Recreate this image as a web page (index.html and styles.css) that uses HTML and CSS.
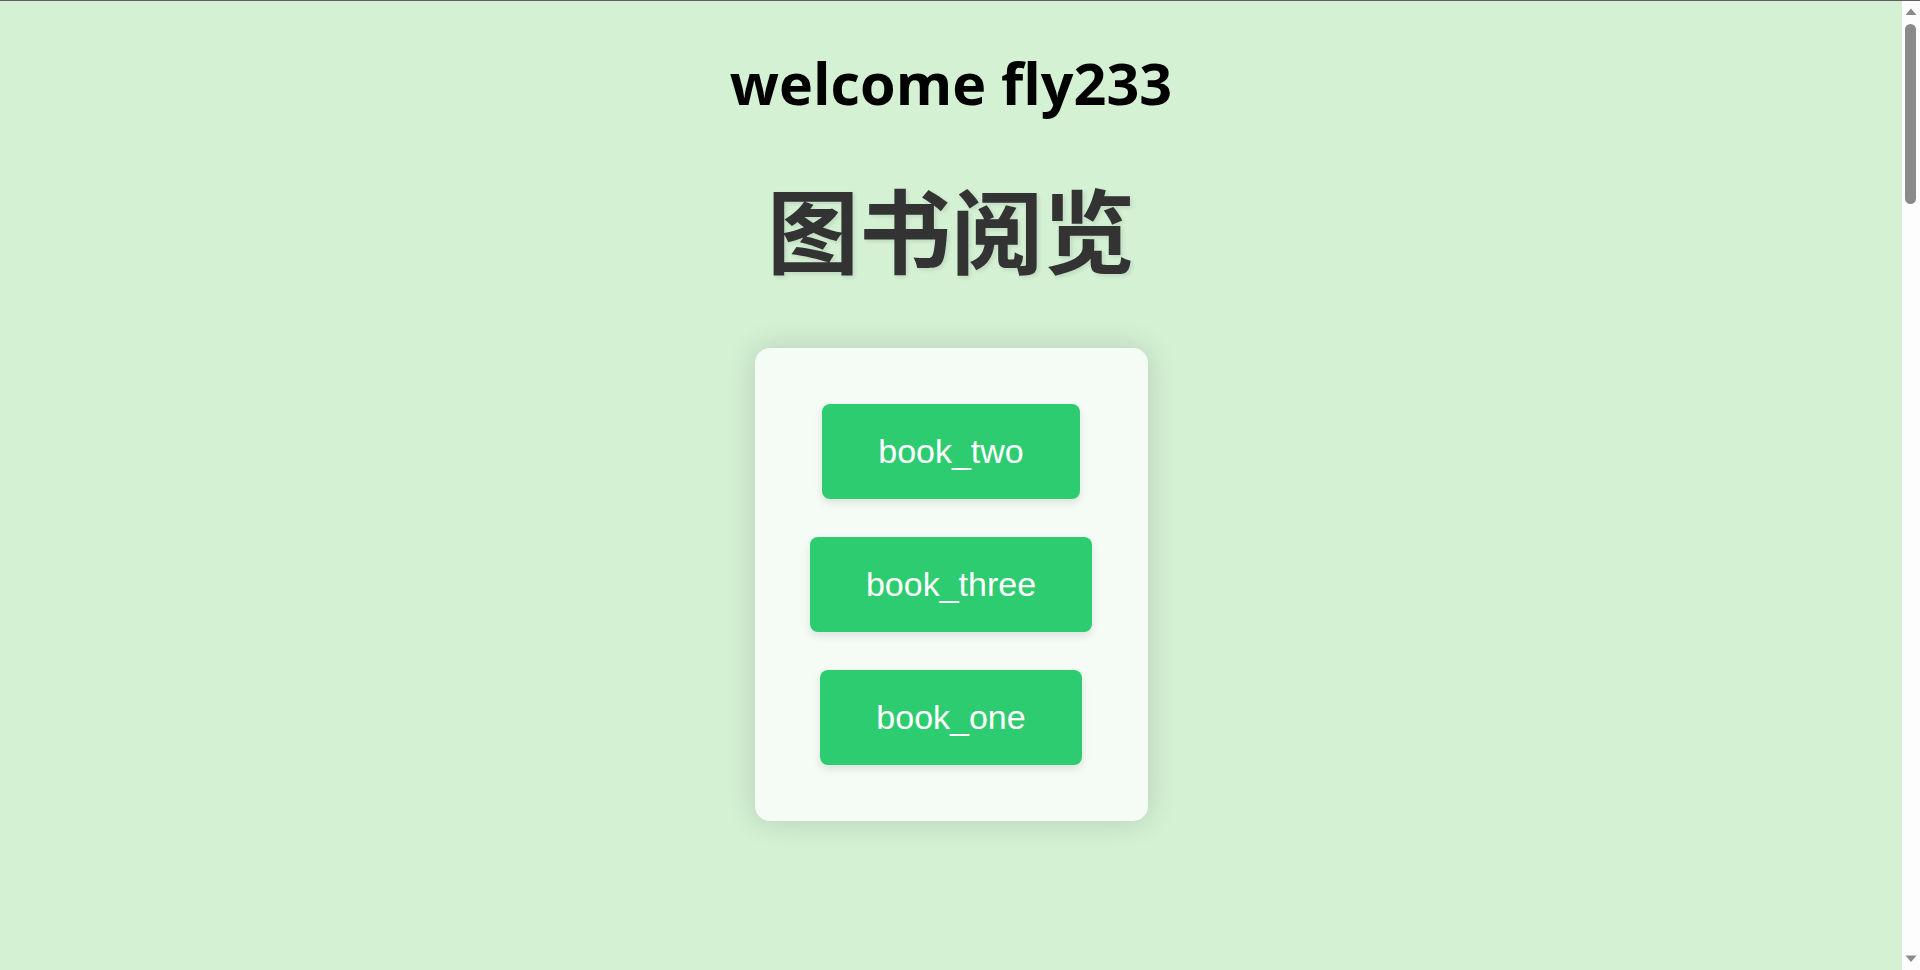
FILE: index.html
```html
<!DOCTYPE html>
<html lang="zh-CN">
<head>
<meta charset="utf-8">
<title>图书阅览</title>
<link rel="stylesheet" href="styles.css">
</head>
<body>
<div class="page">
  <h1 class="welcome">welcome fly233</h1>
  <h2 class="title">图书阅览</h2>
  <div class="card">
    <button class="book">book_two</button>
    <button class="book">book_three</button>
    <button class="book">book_one</button>
  </div>
</div>
<div class="scrollbar" aria-hidden="true">
  <svg class="arrow" width="18" height="17" viewBox="0 0 18 17"><polygon points="9,7.5 14.5,14 3.5,14" fill="#8a8a8a"/></svg>
  <div class="thumb"></div>
  <div class="track-rest"></div>
  <svg class="arrow" width="18" height="17" viewBox="0 0 18 17"><polygon points="3.5,2.5 14.5,2.5 9,9" fill="#8a8a8a"/></svg>
</div>
</body>
</html>
```
FILE: styles.css
```css
html, body {
  margin: 0;
  padding: 0;
}
body {
  background: #d4f1d4;
  overflow: hidden;
}
.page {
  border-top: 1px solid #5f5f5f;
  box-sizing: border-box;
  min-height: 970px;
  padding-right: 18px;
  display: flex;
  flex-direction: column;
  align-items: center;
  text-align: center;
}
.welcome {
  margin: 44px 0 0;
  font-family: "Open Sans", "Noto Sans CJK SC", sans-serif;
  font-weight: 700;
  font-size: 57.5px;
  line-height: 76px;
  color: #000;
}
.title {
  margin: 39px 0 0;
  font-family: "Noto Sans CJK SC", sans-serif;
  font-weight: 700;
  font-size: 92px;
  line-height: 133px;
  color: #333;
  text-shadow: 2px 2px 4px rgba(0, 0, 0, 0.1);
}
.card {
  margin-top: 55px;
  width: 393px;
  box-sizing: border-box;
  padding: 56px 0;
  background: #f5fcf5;
  border-radius: 15px;
  box-shadow: 0 0 30px rgba(0, 0, 0, 0.15);
  display: flex;
  flex-direction: column;
  align-items: center;
  gap: 38px;
}
.book {
  border: none;
  background: #2ecc71;
  color: #fff;
  font-family: "Liberation Sans", Arial, sans-serif;
  font-size: 34px;
  line-height: 39px;
  padding: 28px 56px;
  border-radius: 8px;
  box-shadow: 0 4px 8px rgba(0, 0, 0, 0.1);
  cursor: pointer;
}
.scrollbar {
  position: fixed;
  top: 1px;
  right: 0;
  width: 18px;
  height: calc(100vh - 1px);
  background: #fdfdfd;
  display: flex;
  flex-direction: column;
  align-items: center;
}
.arrow {
  display: block;
  flex: none;
}
.thumb {
  flex: none;
  width: 11px;
  height: 180px;
  margin: 6px 1px 0 0;
  background: #8a8a8a;
  border-radius: 6px;
}
.track-rest {
  flex: 1;
}
```
